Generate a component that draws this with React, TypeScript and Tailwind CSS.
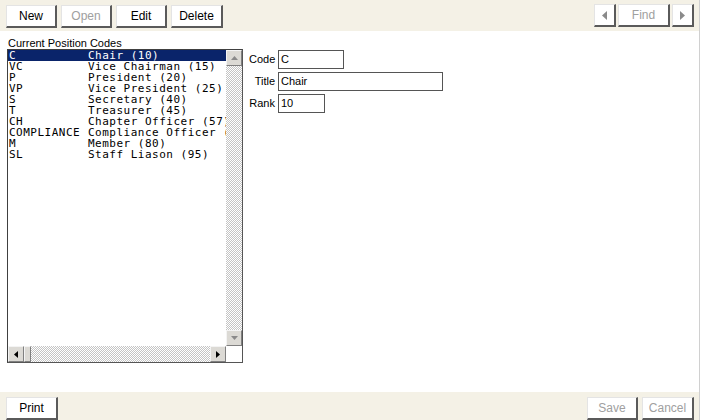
const rows = [
  ["C", "Chair (10)"],
  ["VC", "Vice Chairman (15)"],
  ["P", "President (20)"],
  ["VP", "Vice President (25)"],
  ["S", "Secretary (40)"],
  ["T", "Treasurer (45)"],
  ["CH", "Chapter Officer (57)"],
  ["COMPLIANCE", "Compliance Officer (60)"],
  ["M", "Member (80)"],
  ["SL", "Staff Liason (95)"],
];

function Btn({
  label,
  disabled,
  className = "w-[51px]",
  children,
}: {
  label?: string;
  disabled?: boolean;
  className?: string;
  children?: React.ReactNode;
}) {
  return (
    <button
      className={`${className} h-[23px] flex items-center justify-center bg-white border-t border-l border-t-[#e4e4e4] border-l-[#e4e4e4] border-r-2 border-b-2 border-r-[#5a5a5a] border-b-[#5a5a5a] text-[12px] ${
        disabled ? "text-[#a0a0a0]" : "text-black"
      }`}>
      {label}
      {children}
    </button>
  );
}

function Tri({
  dir,
  color,
  size = 4,
}: {
  dir: "up" | "down" | "left" | "right";
  color: string;
  size?: number;
}) {
  const s = size;
  const l = s * 2 - 1;
  const pts = {
    up: `0,${s} ${l},${s} ${l / 2},0`,
    down: `0,0 ${l},0 ${l / 2},${s}`,
    left: `${s},0 ${s},${l} 0,${l / 2}`,
    right: `0,0 0,${l} ${s},${l / 2}`,
  }[dir];
  const vertical = dir === "up" || dir === "down";
  const w = vertical ? l : s;
  const h = vertical ? s : l;
  return (
    <svg width={w} height={h} viewBox={`0 0 ${w} ${h}`}>
      <polygon points={pts} fill={color} />
    </svg>
  );
}

function SbBtn({ dir, color }: { dir: "up" | "down" | "left" | "right"; color: string }) {
  return (
    <div className="w-[16px] h-[16px] flex items-center justify-center bg-[#dcdad5] border-t border-l border-t-[#f4f4f4] border-l-[#f4f4f4] border-r border-b border-r-[#808080] border-b-[#808080]">
      <Tri dir={dir} color={color} />
    </div>
  );
}

function Field({ label, value, width }: { label: string; value: string; width: string }) {
  return (
    <div className="flex items-center">
      <span className="w-[26px] text-right text-[11px] text-black">{label}</span>
      <div
        className={`${width} ml-[3px] h-[19px] bg-white border border-[#555] flex items-center px-[2px] text-[11px] text-black`}>
        {value}
      </div>
    </div>
  );
}

export default function App() {
  return (
    <div
      className="w-[700px] h-[420px] flex flex-col bg-white border-r border-[#d0d0d0] overflow-hidden"
      style={{ fontFamily: '"Liberation Sans", Arial, sans-serif' }}>
      {/* Top toolbar */}
      <div className="h-[31px] bg-[#f4f1e6] flex items-start justify-between pt-[5px] pl-[6px] pr-[5px]">
        <div className="flex gap-[4px]">
          <Btn label="New" />
          <Btn label="Open" disabled />
          <Btn label="Edit" />
          <Btn label="Delete" className="w-[52px]" />
        </div>
        <div className="flex gap-[2px] -mt-[1px]">
          <Btn className="w-[22px]">
            <Tri dir="left" color="#8a8a8a" size={5} />
          </Btn>
          <Btn label="Find" disabled className="w-[52px]" />
          <Btn className="w-[22px]">
            <Tri dir="right" color="#8a8a8a" size={5} />
          </Btn>
        </div>
      </div>

      {/* Main area */}
      <div className="flex-1 flex pl-[7px] pt-[6px]">
        <div className="flex flex-col">
          <div className="h-[12px] leading-[12px] text-[11px] text-black pl-[1px]">Current Position Codes</div>
          <div className="w-[236px] h-[314px] border border-[#555] border-t-[#404040] border-l-[#404040] grid grid-cols-[1fr_16px] grid-rows-[1fr_16px]">
            <div
              className="overflow-hidden text-[11px] leading-[11px] tracking-[0.5px] text-black"
              style={{ fontFamily: '"DejaVu Sans Mono", "Liberation Mono", monospace' }}>
              {rows.map(([code, title], i) => (
                <div
                  key={code}
                  className={`flex h-[11px] pl-[1px] whitespace-pre ${i === 0 ? "bg-[#0a246a] text-white" : ""}`}>
                  <span className="w-[79px] shrink-0">{code}</span>
                  <span>{title}</span>
                </div>
              ))}
            </div>
            <div className="flex flex-col bg-[conic-gradient(#c4c4c4_25%,#ffffff_0_50%,#c4c4c4_0_75%,#ffffff_0)] bg-[length:2px_2px]">
              <SbBtn dir="up" color="#8a8a8a" />
              <div className="flex-1" />
              <SbBtn dir="down" color="#8a8a8a" />
            </div>
            <div className="flex bg-[conic-gradient(#c4c4c4_25%,#ffffff_0_50%,#c4c4c4_0_75%,#ffffff_0)] bg-[length:2px_2px]">
              <SbBtn dir="left" color="#000" />
              <div className="w-[7px] h-[16px] bg-[#dcdad5] border-t border-l border-t-[#f4f4f4] border-l-[#f4f4f4] border-r border-b border-r-[#808080] border-b-[#808080]" />
              <div className="flex-1" />
              <SbBtn dir="right" color="#000" />
            </div>
            <div className="bg-white" />
          </div>
        </div>

        <div className="ml-[6px] mt-[13px] flex flex-col gap-[3px]">
          <Field label="Code" value="C" width="w-[66px]" />
          <Field label="Title" value="Chair" width="w-[165px]" />
          <Field label="Rank" value="10" width="w-[47px]" />
        </div>
      </div>

      {/* Bottom toolbar */}
      <div className="h-[28px] bg-[#f4f1e6] flex items-start justify-between pt-[5px] pl-[6px] pr-[5px]">
        <Btn label="Print" className="w-[52px]" />
        <div className="flex gap-[4px]">
          <Btn label="Save" disabled />
          <Btn label="Cancel" disabled className="w-[52px]" />
        </div>
      </div>
    </div>
  );
}
